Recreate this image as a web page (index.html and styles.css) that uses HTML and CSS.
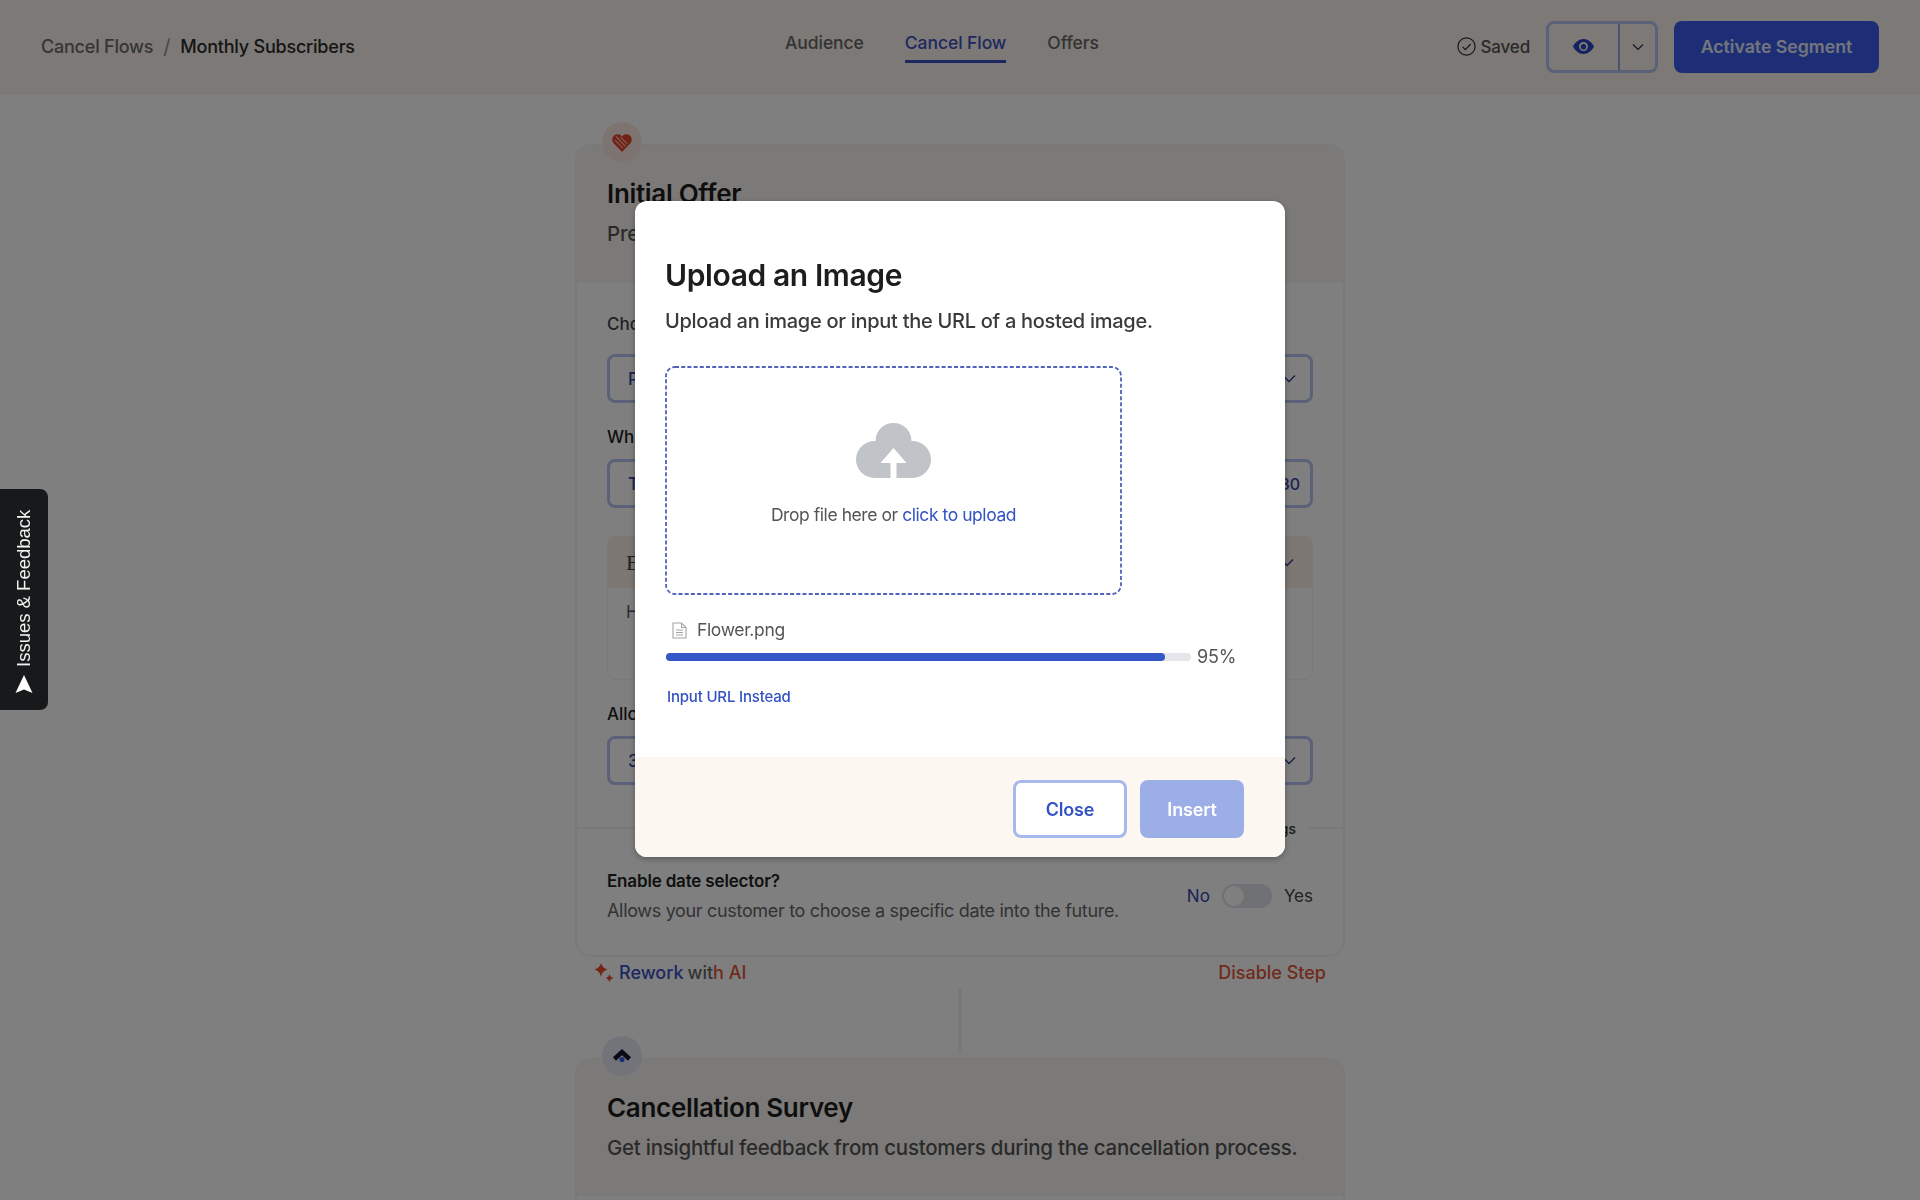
FILE: index.html
```html
<!DOCTYPE html>
<html>
<head>
  <meta charset="UTF-8">
  <title>Cancel Flow — Monthly Subscribers</title>
  <link rel="stylesheet" href="styles.css">
</head>

<body>
  <header class="topbar">
    <div class="crumbs">
      <span class="crumb">Cancel Flows</span>
      <span class="crumb-sep">/</span>
      <span class="crumb-current">Monthly Subscribers</span>
    </div>
    <nav class="tabs">
      <a class="tab">Audience</a>
      <a class="tab tab-active">Cancel Flow</a>
      <a class="tab">Offers</a>
    </nav>
    <div class="actions">
      <span class="saved">
        <svg width="19" height="19" viewBox="0 0 19 19" fill="none" stroke="#2e2e2e" stroke-width="1.2"><circle cx="9.5" cy="9.5" r="8.6"/><path d="M5.6 9.8l2.8 2.8 5.2-5.6"/></svg>
        Saved
      </span>
      <div class="preview-group">
        <button class="preview-btn">
          <svg width="21" height="15" viewBox="0 0 21 15"><path fill="#2b44c4" fill-rule="evenodd" d="M10.500 0c4.400 0 8.500 3.400 10.500 7.500-2 4.100-6.100 7.500-10.500 7.500S2 11.600 0 7.500C2 3.400 6.100 0 10.500 0zm0 3a4.500 4.500 0 1 0 0 9 4.500 4.500 0 0 0 0-9z"/><circle cx="10.500" cy="7.800" r="2.700" fill="#2b44c4"/></svg>
        </button>
        <button class="preview-more">
          <svg class="chev chev-dark" width="12" height="8" viewBox="0 0 12 8"><path d="M1 1.500l5 5 5-5"/></svg>
        </button>
      </div>
      <button class="activate">Activate Segment</button>
    </div>
  </header>

  <main class="flow">
    <section class="card">
      <span class="step-badge step-heart">
        <svg width="20" height="19" viewBox="0 0 20 19"><path fill="#e4452a" d="M10 19L1.400 10C-.9 7.300.4 1.900 4.800 1.300c2.300-.3 4 .6 5.200 2.200 1.200-1.600 2.900-2.500 5.200-2.200 4.400.6 5.700 6 3.400 8.700z"/><path fill="none" stroke="#f7c2b5" stroke-width="1.100" d="M4 3.500l9.500 9.800M2.800 6.800l8.200 8.400M8.500 3.800l6.800 7"/></svg>
      </span>
      <div class="card-head">
        <h2 class="card-title">Initial Offer</h2>
        <p class="card-desc">Present an offer to customers before they cancel.</p>
      </div>
      <div class="card-body">
        <label class="field-label">Choose an offer</label>
        <div class="select">
          <span>Pause subscription</span>
          <svg class="chev" width="14" height="9" viewBox="0 0 14 9"><path d="M1 1.500l6 6 6-6"/></svg>
        </div>
        <label class="field-label field-label-strong">What is the headline?</label>
        <div class="select select-count">
          <span>Take a break</span>
          <span class="count">30</span>
        </div>
        <div class="subbox">
          <div class="subbox-head">
            <span class="subbox-title">Body</span>
            <svg class="chev" width="14" height="9" viewBox="0 0 14 9"><path d="M1 1.500l6 6 6-6"/></svg>
          </div>
          <div class="subbox-body">Here is some copy</div>
        </div>
        <label class="field-label field-label-strong">Allowed pause length</label>
        <div class="select">
          <span>3 months</span>
          <svg class="chev" width="14" height="9" viewBox="0 0 14 9"><path d="M1 1.500l6 6 6-6"/></svg>
        </div>
      </div>
      <div class="settings-rule"><span>Settings</span></div>
      <div class="option-row">
        <div>
          <div class="option-title">Enable date selector?</div>
          <div class="option-desc">Allows your customer to choose a specific date into the future.</div>
        </div>
        <div class="toggle-wrap">
          <span class="toggle-no">No</span>
          <span class="toggle"><span class="toggle-knob"></span></span>
          <span>Yes</span>
        </div>
      </div>
    </section>

    <div class="card-links">
      <span class="rework">
        <svg width="20" height="21" viewBox="0 0 20 21"><path fill="#ea4b2c" d="M7 1c.8 3.200 2.800 5.200 6.500 6.500C9.800 8.800 7.800 10.800 7 15c-.8-4.200-2.800-6.200-6.500-7.500C4.200 6.200 6.200 4.200 7 1z"/><path fill="#ea4b2c" d="M15.500 12c.5 2 1.500 3 3.800 4-2.300 1-3.300 2-3.800 4.300-.5-2.300-1.500-3.300-3.800-4.300 2.300-1 3.300-2 3.800-4z"/></svg>
        <span class="rework-a">Rework</span> <span class="rework-b">wit</span><span class="rework-c">h AI</span>
      </span>
      <span class="disable">Disable Step</span>
    </div>
    <div class="connector"></div>

    <section class="card">
      <span class="step-badge step-survey">
        <svg width="20" height="16" viewBox="0 0 20 16"><circle cx="10" cy="11.500" r="2.600" fill="#3d5cec"/><path fill="none" stroke="#10162f" stroke-width="4.500" d="M2.500 11L10 4l7.500 7"/></svg>
      </span>
      <div class="card-head card-head-last">
        <h2 class="card-title">Cancellation Survey</h2>
        <p class="card-desc">Get insightful feedback from customers during the cancellation process.</p>
      </div>
      <div class="card-body card-body-stub"></div>
    </section>
  </main>

  <div class="overlay">
    <div class="modal">
      <div class="modal-body">
        <h1 class="modal-title">Upload an Image</h1>
        <p class="modal-sub">Upload an image or input the URL of a hosted image.</p>

        <div class="dropzone">
          <svg class="dropzone-line" width="457" height="229" viewBox="0 0 457 229" fill="none"><rect x="1" y="1" width="455" height="227" rx="9" stroke="#5163bb" stroke-width="1.800" stroke-dasharray="4 2.200"/></svg>
          <svg width="75" height="55" viewBox="0 0 75 55" fill="#c0c3c8"><circle cx="37.500" cy="18" r="18"/><circle cx="18.500" cy="36.500" r="18.500"/><circle cx="56.500" cy="36.500" r="18.500"/><rect x="18" y="20" width="39" height="35"/><path fill="#fff" d="M37.500 25l13 15H40.500v15h-6V40h-10z"/></svg>
          <p class="drop-text">Drop file here or <a class="drop-link">click to upload</a></p>
        </div>

        <div class="file-row">
          <svg width="15" height="17" viewBox="0 0 15 17" fill="none" stroke="#a3a5a9" stroke-width="1.100"><path d="M1 1h8.500L14 5.500V16H1z"/><path d="M9.500 1v4.500H14M4 8h7M4 10.500h7M4 13h7"/></svg>
          <span>Flower.png</span>
        </div>
        <div class="progress-row">
          <div class="progress"><div class="progress-fill" style="width: 95%"></div></div>
          <span class="progress-num">95%</span>
        </div>
        <a class="url-link">Input URL Instead</a>
      </div>
      <div class="modal-foot">
        <button class="btn-close">Close</button>
        <button class="btn-insert">Insert</button>
      </div>
    </div>
  </div>

  <button class="feedback-tab">
    <svg width="18" height="18" viewBox="0 0 18 18"><path fill="#fff" d="M9 0l8.500 18L9 14.500.5 18z"/></svg>
    <span>Issues &amp; Feedback</span>
  </button>
</body>

</html>

```

FILE: styles.css
```css
html, body {
  height: 100%;
  margin: 0;
  overflow: hidden;
}

body {
  background: #fff;
  color: #1d1d1d;
  font-family: 'Inter', 'Liberation Sans', sans-serif;
}

h1, h2, p {
  margin: 0;
}

button {
  font-family: inherit;
  cursor: pointer;
}

.chev {
  fill: none;
  stroke: #2c3a86;
  stroke-width: 1.3;
}

.chev-dark {
  stroke: #20233c;
  stroke-width: 1.1;
}

/* top bar */
.topbar {
  display: flex;
  align-items: center;
  height: 94px;
  padding: 0 41px;
  box-sizing: border-box;
  background: #f9f2ec;
  border-bottom: 1px solid #f5f0ec;
}

.crumbs {
  flex: 0 0 744px;
  display: flex;
  align-items: center;
  font-size: 18px;
  font-weight: 500;
  letter-spacing: -0.012em;
}

.crumb {
  color: #6b6b6b;
}

.crumb-sep {
  color: #8d8d8d;
  margin: 0 10px;
  font-size: 20px;
  font-weight: 400;
}

.crumb-current {
  color: #2a2a2a;
}

.tabs {
  display: flex;
  gap: 41px;
  margin-top: -4px;
  font-size: 17.500px;
  font-weight: 500;
  letter-spacing: -0.004em;
  color: #666;
}

.tab {
  padding: 5px 0 7px;
  border-bottom: 3px solid transparent;
}

.tab-active {
  color: #3d50c0;
  border-bottom-color: #3d50c0;
}

.actions {
  margin-left: auto;
  display: flex;
  align-items: center;
}

.saved {
  display: flex;
  align-items: center;
  gap: 5px;
  margin-right: 16px;
  font-size: 17px;
  font-weight: 500;
  letter-spacing: -0.01em;
  color: #555;
}

.preview-group {
  display: flex;
  width: 112px;
  height: 52px;
  margin-right: 16px;
  border: 3px solid #b8c2f5;
  border-radius: 8px;
  box-sizing: border-box;
}

.preview-btn, .preview-more {
  display: flex;
  align-items: center;
  justify-content: center;
  background: none;
  border: 0;
  padding: 0;
}

.preview-btn {
  width: 71px;
  border-right: 2px solid #98a6e4;
}

.preview-more {
  flex: 1;
}

.activate {
  width: 205px;
  height: 52px;
  background: #3d5cec;
  color: #e7ebfa;
  border: 0;
  border-radius: 8px;
  font-size: 17.700px;
  font-weight: 600;
}

/* flow column */
.flow {
  width: 770px;
  height: 1106px;
  margin: 0 auto;
  padding-top: 50px;
  box-sizing: border-box;
  overflow: hidden;
}

.card {
  position: relative;
  border: 2px solid #f5f3f1;
  border-radius: 16px;
  box-sizing: border-box;
}

.step-badge {
  position: absolute;
  top: -24px;
  left: 25px;
  width: 40px;
  height: 40px;
  border-radius: 50%;
  display: flex;
  align-items: center;
  justify-content: center;
}

.step-heart {
  background: #fae9e5;
}

.step-survey {
  background: #e6e9f2;
}

.card-head {
  height: 137px;
  padding: 32px 30px 0;
  box-sizing: border-box;
  background: #f9f5f1;
  border-radius: 14px 14px 0 0;
}

.card-head-last {
  height: 134px;
}

.card-title {
  font-size: 26px;
  line-height: 32px;
  font-weight: 600;
  letter-spacing: -0.012em;
}

.card-desc {
  margin-top: 11px;
  font-size: 20.500px;
  line-height: 26px;
  font-weight: 500;
  letter-spacing: -0.012em;
  color: #555;
}

.card-body {
  padding: 30px 30px 0;
}

.card-body-stub {
  height: 100px;
  border-top: 2px solid #f5f3f1;
}

.field-label {
  display: block;
  height: 22px;
  line-height: 22px;
  margin-bottom: 19px;
  font-size: 17px;
  font-weight: 500;
  color: #444;
}

.field-label-strong {
  margin-top: 23px;
  margin-bottom: 11px;
  color: #222;
}

.select {
  display: flex;
  align-items: center;
  justify-content: space-between;
  height: 49px;
  padding: 0 14px 0 18px;
  box-sizing: border-box;
  border: 3px solid #b8c2f5;
  border-radius: 8px;
  font-size: 17px;
  font-weight: 500;
  color: #3546a8;
}

.select-count {
  padding-right: 10px;
}

.count {
  font-size: 16px;
}

.subbox {
  margin-top: 28px;
  height: 144px;
  border: 1px solid #f3f2f0;
  border-radius: 8px;
  box-sizing: border-box;
}

.subbox-head {
  display: flex;
  align-items: center;
  justify-content: space-between;
  height: 51px;
  padding: 0 18px;
  background: #f8eee6;
  border-radius: 8px 8px 0 0;
}

.subbox-title {
  font-family: 'Liberation Serif', serif;
  font-size: 22px;
  color: #444;
}

.subbox-body {
  padding: 14px 18px;
  font-size: 17px;
  color: #555;
}

.settings-rule {
  display: flex;
  align-items: center;
  justify-content: flex-end;
  margin-top: 33px;
  height: 20px;
  font-size: 14px;
  font-weight: 500;
  color: #333;
}

.settings-rule span {
  margin-right: 47px;
}

.settings-rule::before {
  content: "";
  flex: 1;
  height: 2px;
  background: #f4f2f0;
}

.settings-rule::after {
  content: "";
  width: 34px;
  height: 2px;
  background: #f4f2f0;
  margin-left: -34px;
}

.option-row {
  display: flex;
  justify-content: space-between;
  align-items: center;
  height: 117px;
  padding: 0 30px 2px;
  box-sizing: border-box;
}

.option-title {
  font-size: 17px;
  font-weight: 600;
  letter-spacing: -0.01em;
  color: #222;
}

.option-desc {
  margin-top: 9px;
  font-size: 18px;
  letter-spacing: -0.018em;
  color: #666;
}

.toggle-wrap {
  display: flex;
  align-items: center;
  gap: 12px;
  font-size: 17px;
  color: #444;
}

.toggle-no {
  color: #3546a8;
}

.toggle {
  display: flex;
  align-items: center;
  width: 50px;
  height: 24px;
  padding: 0 2px;
  box-sizing: border-box;
  background: #dfe2e8;
  border-radius: 12px;
}

.toggle-knob {
  width: 20px;
  height: 20px;
  border-radius: 50%;
  background: #fff;
}

.card-links {
  display: flex;
  justify-content: space-between;
  align-items: center;
  padding: 0 19px;
  height: 31px;
  font-size: 18px;
  font-weight: 500;
}

.rework {
  display: flex;
  align-items: center;
  gap: 5px;
}

.rework-a {
  color: #3d50c0;
}

.rework-b {
  color: #666;
  margin-left: -1px;
}

.rework-c {
  color: #e0563c;
  margin-left: -5px;
}

.disable {
  color: #e0563c;
}

.connector {
  width: 4px;
  height: 66px;
  margin: 0 auto 4px;
  background: #f3f3f3;
}

/* modal */
.overlay {
  position: fixed;
  inset: 0;
  display: flex;
  justify-content: center;
  align-items: flex-start;
  padding-top: 201px;
  background: rgba(0, 0, 0, 0.5);
}

.modal {
  width: 650px;
  background: #fff;
  border-radius: 12px;
  overflow: hidden;
  box-shadow: 0 2px 6px rgba(0, 0, 0, 0.3);
}

.modal-body {
  height: 556px;
  padding: 56px 30px 0;
  box-sizing: border-box;
}

.modal-title {
  font-size: 30px;
  line-height: 36px;
  font-weight: 600;
  letter-spacing: -0.013em;
  color: #1d1d1d;
}

.modal-sub {
  margin-top: 15px;
  font-size: 20px;
  line-height: 26px;
  font-weight: 500;
  letter-spacing: -0.014em;
  color: #3a3a3a;
}

.dropzone {
  position: relative;
  display: flex;
  flex-direction: column;
  align-items: center;
  width: 457px;
  height: 229px;
  margin-top: 32px;
  padding-top: 57px;
  box-sizing: border-box;
}

.dropzone-line {
  position: absolute;
  top: 0;
  left: 0;
}

.drop-text {
  margin-top: 25px;
  font-size: 17.500px;
  line-height: 24px;
  letter-spacing: -0.025em;
  color: #555;
}

.drop-link, .url-link {
  color: #3352c4;
}

.file-row {
  display: flex;
  align-items: center;
  gap: 10px;
  margin: 23px 0 0 7px;
  font-size: 17.500px;
  line-height: 24px;
  letter-spacing: -0.02em;
  color: #555;
}

.progress-row {
  display: flex;
  align-items: center;
  margin: 4px 0 0 1px;
}

.progress {
  width: 525px;
  height: 8px;
  border-radius: 4px;
  background: #e4e6ea;
}

.progress-fill {
  height: 100%;
  border-radius: 4px;
  background: #3558c8;
}

.progress-num {
  margin-left: 6px;
  font-size: 18px;
  letter-spacing: -0.01em;
  color: #555;
}

.url-link {
  display: block;
  margin: 20px 0 0 2px;
  font-size: 15px;
  line-height: 20px;
  font-weight: 500;
  letter-spacing: -0.012em;
}

.modal-foot {
  display: flex;
  justify-content: flex-end;
  align-items: flex-start;
  gap: 13px;
  height: 100px;
  padding: 23px 41px 0 0;
  box-sizing: border-box;
  background: #fdf7f2;
}

.btn-close, .btn-insert {
  height: 58px;
  border-radius: 8px;
  font-size: 18px;
  font-weight: 600;
  letter-spacing: -0.01em;
}

.btn-close {
  width: 114px;
  background: #fff;
  color: #3352c4;
  border: 3px solid #a9b8ec;
}

.btn-insert {
  width: 104px;
  background: #9baee6;
  color: #fff;
  border: 0;
}

/* feedback tab */
.feedback-tab {
  position: fixed;
  left: 0;
  top: 489px;
  display: flex;
  align-items: center;
  justify-content: flex-start;
  writing-mode: vertical-rl;
  transform: rotate(180deg);
  gap: 8px;
  width: 48px;
  height: 221px;
  padding: 17px 0 0;
  box-sizing: border-box;
  background: #17191b;
  color: #f2f2f2;
  border: 0;
  border-radius: 8px 0 0 8px;
  font-family: 'Liberation Sans', sans-serif;
  font-size: 18.500px;
}

.feedback-tab svg {
  transform: rotate(180deg);
}
```
